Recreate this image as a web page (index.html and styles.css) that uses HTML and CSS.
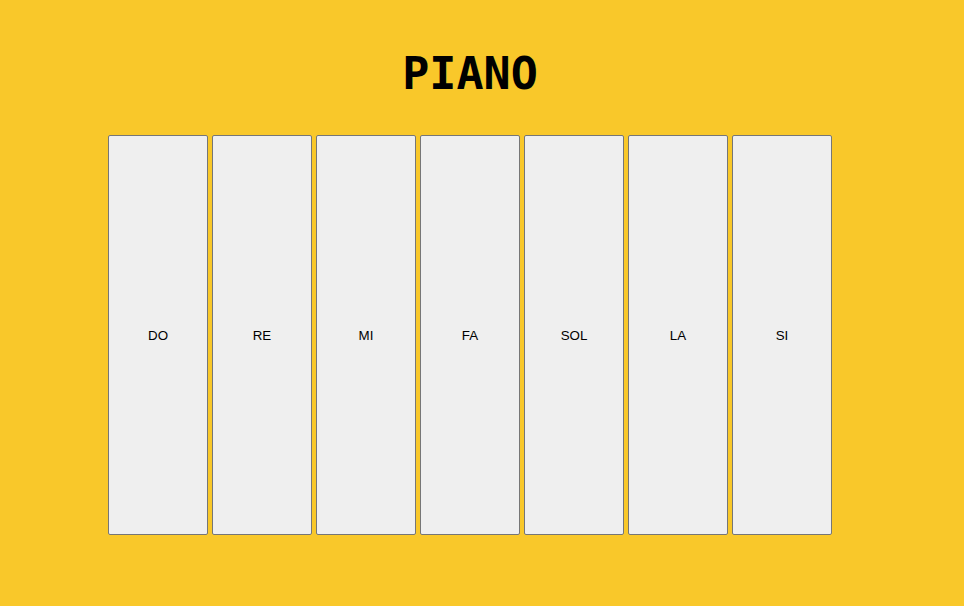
FILE: index.html
```html
<!DOCTYPE html>
<html>
<head>
<meta charset="utf-8">
<link rel="stylesheet" href="styles.css">
</head>
<body>
<main class="page">
  <h1 class="title">PIANO</h1>
  <div class="keys">
    <button class="key">DO</button>
    <button class="key">RE</button>
    <button class="key">MI</button>
    <button class="key">FA</button>
    <button class="key">SOL</button>
    <button class="key">LA</button>
    <button class="key">SI</button>
  </div>
</main>
</body>
</html>
```
FILE: styles.css
```css
html, body {
  margin: 0;
  padding: 0;
  background: #f9c82a;
  height: 100%;
}
.page {
  width: 940px;
  display: flex;
  flex-direction: column;
  align-items: center;
}
.title {
  margin: 44px 0 0;
  height: 91px;
  font-family: "DejaVu Sans Mono", monospace;
  font-weight: bold;
  font-size: 45px;
  line-height: 60px;
  color: #000;
}
.keys {
  display: flex;
  gap: 4px;
}
.key {
  width: 100px;
  height: 400px;
  background: #efefef;
  border: 1px solid #767676;
  border-radius: 2px;
  font-family: "Liberation Sans", Arial, sans-serif;
  font-size: 13.33px;
  color: #000;
  padding: 0;
}
```
